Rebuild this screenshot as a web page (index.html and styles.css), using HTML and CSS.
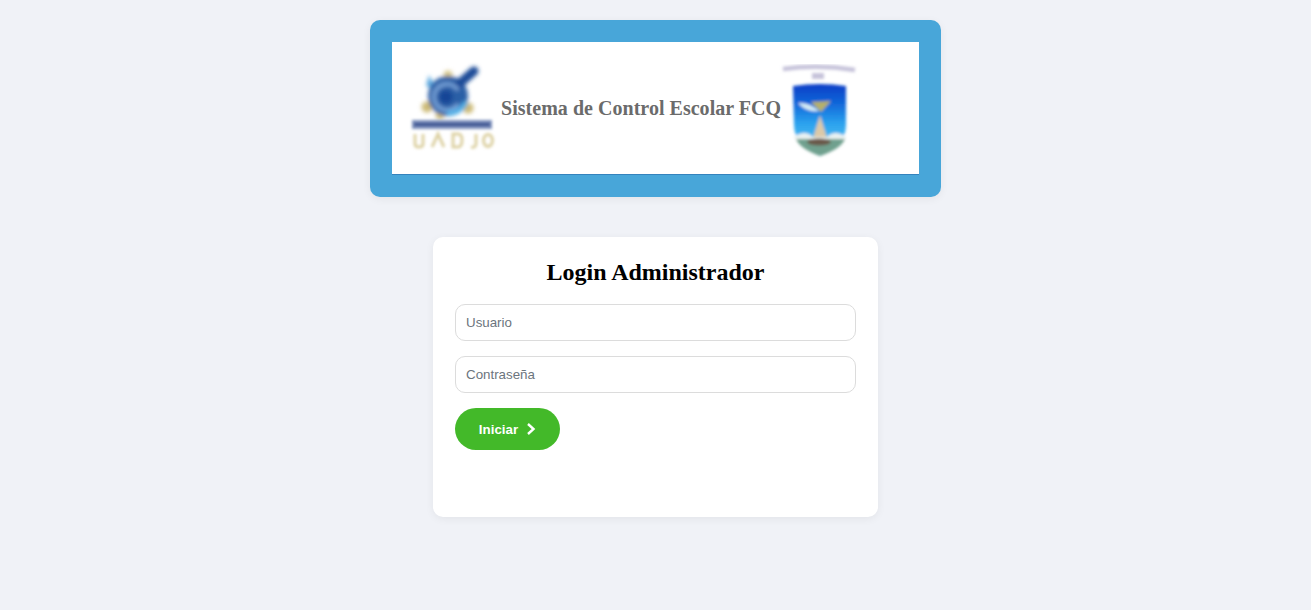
FILE: index.html
```html
<!DOCTYPE html>
<html lang="es">
<head>
<meta charset="utf-8">
<title>Login Administrador</title>
<link rel="stylesheet" href="styles.css">
</head>
<body>
<main class="page">
  <header class="banner">
    <div class="banner-inner">
      <svg class="logo-left" width="96" height="95" viewBox="0 0 96 95" aria-hidden="true">
        <defs>
          <filter id="b1" x="-20%" y="-20%" width="140%" height="140%"><feGaussianBlur stdDeviation="1.9"/></filter>
          <filter id="b1s" x="-20%" y="-20%" width="140%" height="140%"><feGaussianBlur stdDeviation="1.5"/></filter>
        </defs>
        <g filter="url(#b1)">
          <circle cx="43" cy="15" r="4.5" fill="#d6c688"/>
          <circle cx="22" cy="47" r="5.5" fill="#cdbb78"/>
          <circle cx="63" cy="48" r="5.5" fill="#cdbb78"/>
          <circle cx="35" cy="55" r="4.5" fill="#cdbb78"/>
          <path d="M24 15 L32 30 L21 26 Z" fill="#5aa8e0"/>
          <circle cx="43" cy="36" r="20" fill="#2b5ea6"/>
          <path d="M54 24 L69 11" stroke="#1f4c98" stroke-width="9" stroke-linecap="round"/>
          <path d="M53 30 A13 13 0 1 0 53 44" fill="none" stroke="#7aa6da" stroke-width="3.5"/>
          <circle cx="41" cy="37" r="6.5" fill="#164596"/>
          <path d="M42 53 Q55 54 61 42" stroke="#4fb0e8" stroke-width="5" fill="none"/>
        </g>
        <g filter="url(#b1s)">
          <rect x="7" y="60" width="80" height="9" fill="#7d90bc"/>
          <rect x="9" y="63" width="76" height="3" fill="#2c4a8c"/>
          <path d="M10 74 V84 Q10 87 14 87 Q18 87 18 84 V74" fill="none" stroke="#ddd1a4" stroke-width="3"/>
          <path d="M27 87 L33 74 L39 87" fill="none" stroke="#ddd1a4" stroke-width="3"/>
          <path d="M48 74 H53 Q57 74 57 80 Q57 87 53 87 H48 Z" fill="none" stroke="#ddd1a4" stroke-width="3"/>
          <path d="M71 74 V84 Q71 88 66 87" fill="none" stroke="#ddd1a4" stroke-width="3"/>
          <ellipse cx="83" cy="80.5" rx="4.5" ry="6" fill="none" stroke="#ddd1a4" stroke-width="3"/>
        </g>
      </svg>
      <span class="banner-title">Sistema de Control Escolar FCQ</span>
      <svg class="logo-right" width="90" height="105" viewBox="0 0 90 105" aria-hidden="true">
        <defs>
          <filter id="b2" x="-20%" y="-20%" width="140%" height="140%"><feGaussianBlur stdDeviation="1.8"/></filter>
          <filter id="b2s" x="-20%" y="-20%" width="140%" height="140%"><feGaussianBlur stdDeviation="1.8"/></filter>
          <linearGradient id="sky" x1="0" y1="0" x2="0" y2="1">
            <stop offset="0" stop-color="#0a3ec6"/><stop offset="0.25" stop-color="#0f63d8"/><stop offset="0.55" stop-color="#2ba2ee"/><stop offset="0.75" stop-color="#46b6f0"/>
          </linearGradient>
        </defs>
        <g filter="url(#b2s)">
          <path d="M8 14 Q44 9 80 15" fill="none" stroke="#c6c3da" stroke-width="4.5"/>
          <rect x="37" y="18" width="12" height="6" fill="#c6c3da"/>
        </g>
        <g filter="url(#b2)">
          <path d="M18 31 Q45 27 71 31 V70 Q71 90 45 101 Q19 90 19 70 Z" fill="url(#sky)"/>
          <path d="M23 48 Q34 47 44 56 Q32 58 23 48 Z" fill="#d5ecf4"/>
          <path d="M36 47 L56 46 L46 57 Z" fill="#b5b06c"/>
          <path d="M45 60 L52 83 L38 83 Z" fill="#dcc9a8"/>
          <path d="M19 82 Q30 74 38 82 H52 Q60 74 71 82 V84 H19 Z" fill="#eaf2f2"/>
          <path d="M21 84 H70 Q66 94 45 101 Q25 94 21 84 Z" fill="#6fa08e"/>
          <ellipse cx="44" cy="87" rx="12" ry="3.5" fill="#6b5848"/>
        </g>
      </svg>
    </div>
  </header>

  <section class="login-card">
    <h1 class="login-title">Login Administrador</h1>
    <form class="login-form">
      <input class="field" type="text" placeholder="Usuario">
      <input class="field" type="password" placeholder="Contraseña">
      <button class="submit" type="button">
        <span>Iniciar</span>
        <svg width="10" height="14" viewBox="0 0 10 14" aria-hidden="true"><path d="M2 2 L7.5 7 L2 12" fill="none" stroke="#fff" stroke-width="2.4"/></svg>
      </button>
    </form>
  </section>
</main>
</body>
</html>
```
FILE: styles.css
```css
* { box-sizing: border-box; }
html, body { margin: 0; height: 100%; }
body {
  background: #f0f2f7;
  font-family: "Liberation Sans", Arial, sans-serif;
  overflow: hidden;
}
.page {
  display: flex;
  flex-direction: column;
  align-items: center;
  padding-top: 20px;
  gap: 40px;
}
.banner {
  width: 571px;
  height: 177px;
  padding: 22px;
  background: #48a6d9;
  border-radius: 10px;
  box-shadow: 0 2px 8px rgba(0, 0, 0, 0.06);
}
.banner-inner {
  height: 133px;
  display: flex;
  align-items: flex-start;
  background: #fff;
  border-bottom: 1px solid #3583bd;
  padding-left: 13px;
}
.logo-left { flex: none; margin-top: 18px; }
.logo-right { flex: none; margin-top: 13px; margin-left: -6px; }
.banner-title {
  flex: none;
  margin-top: 54px;
  font-family: "Liberation Serif", "Times New Roman", serif;
  font-weight: 700;
  font-size: 20px;
  line-height: 24px;
  letter-spacing: 0.03px;
  color: #6b6b6b;
  white-space: nowrap;
}
.login-card {
  width: 445px;
  height: 280px;
  padding: 22px;
  background: #fff;
  border-radius: 10px;
  box-shadow: 0 2px 8px rgba(0, 0, 0, 0.06);
}
.login-title {
  margin: 0 0 18px;
  font-family: "Liberation Serif", "Times New Roman", serif;
  font-weight: 700;
  font-size: 24px;
  line-height: 27px;
  text-align: center;
  color: #000;
}
.login-form {
  display: flex;
  flex-direction: column;
  align-items: flex-start;
  gap: 15px;
}
.field {
  width: 401px;
  height: 37px;
  padding: 0 10px;
  border: 1px solid #dcdcdc;
  border-radius: 10px;
  font-family: "Liberation Sans", Arial, sans-serif;
  font-size: 13.333px;
  color: #333;
  background: #fff;
  outline: none;
}
.field::placeholder { color: #6c757d; opacity: 1; }
.submit {
  display: flex;
  align-items: center;
  justify-content: center;
  gap: 8px;
  width: 105px;
  height: 42px;
  border: none;
  border-radius: 21px;
  background: #43b929;
  color: #fff;
  font-family: "Liberation Sans", Arial, sans-serif;
  font-size: 13.333px;
  font-weight: 700;
  cursor: pointer;
}
```
